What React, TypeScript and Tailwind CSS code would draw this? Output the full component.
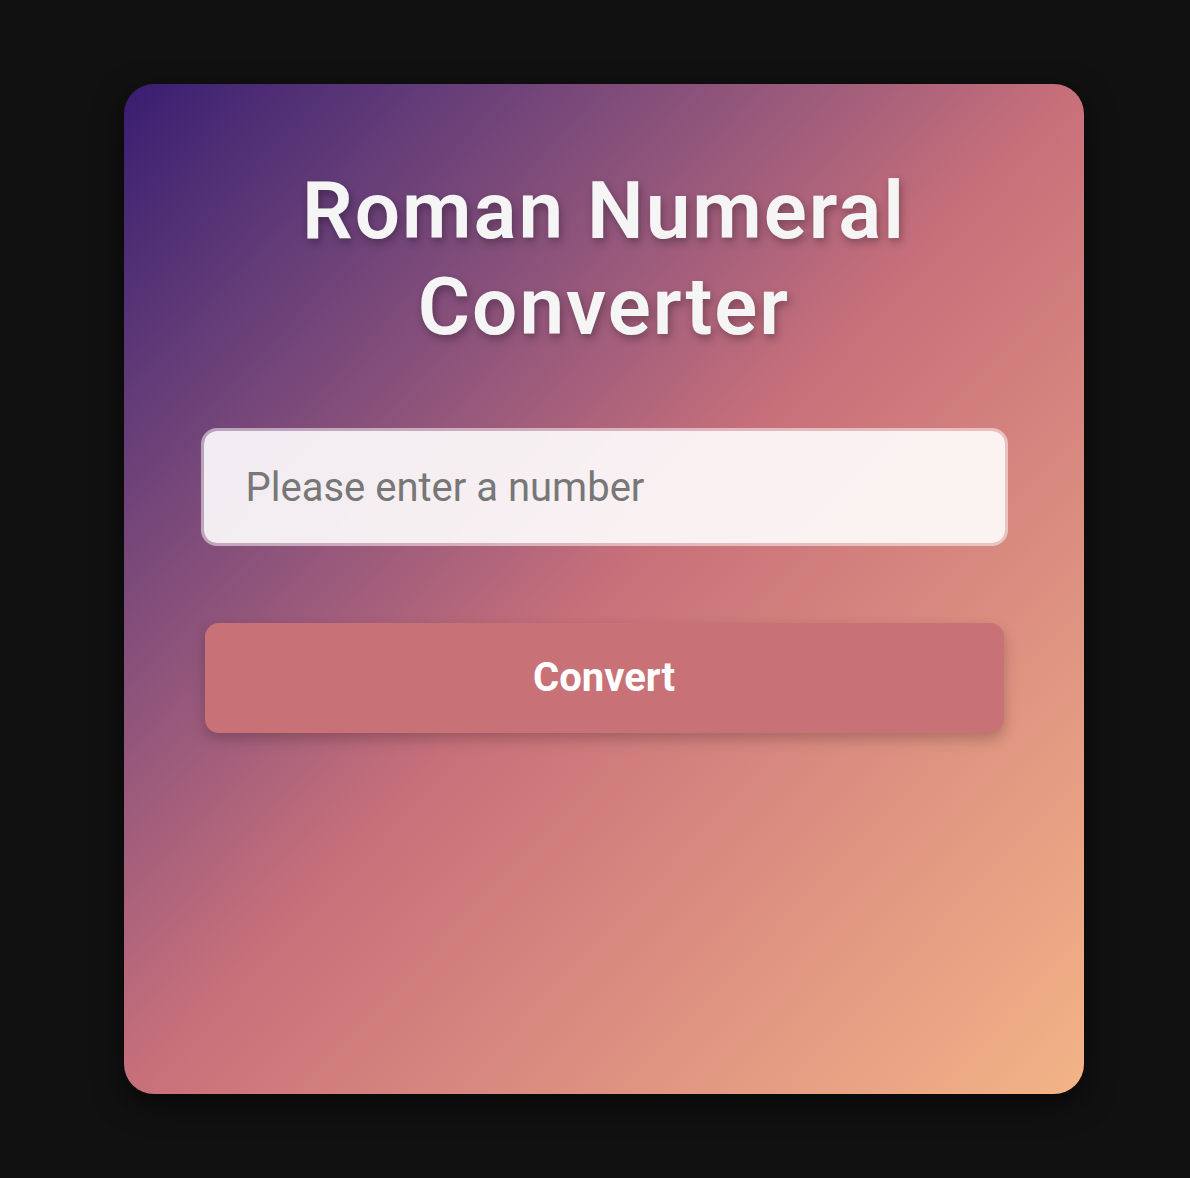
import React, { useState } from 'react';

const App: React.FC = () => {
  const [value, setValue] = useState('');

  return (
    <div
      className="min-h-[1178px] w-full bg-[#111111] pt-[84px] pl-[124px]"
      style={{ fontFamily: 'Roboto, "Liberation Sans", sans-serif' }}
    >
      <div className="flex h-[1010px] w-[960px] flex-col items-center rounded-[30px] bg-gradient-to-br from-[#3a1c71] via-[#c8707a] to-[#f3b486] pt-[79px] shadow-[0_10px_30px_rgba(0,0,0,0.55)]">
        {/* Title */}
        <h1 className="text-center text-[80px] font-semibold leading-[96px] tracking-[2px] text-[#f5f5f5] [text-shadow:2px_4px_8px_rgba(0,0,0,0.3)]">
          Roman Numeral
          <br />
          Converter
        </h1>

        {/* Number input */}
        <input
          type="text"
          value={value}
          onChange={(e) => setValue(e.target.value)}
          placeholder="Please enter a number"
          className="mt-[73px] h-[118px] w-[807px] rounded-[16px] border-[3px] border-white/50 bg-white/90 bg-clip-padding pl-[42px] text-[40px] text-[#333] outline-none placeholder:text-[#777777]"
        />

        {/* Convert button */}
        <button
          type="button"
          className="mt-[77px] h-[110px] w-[799px] rounded-[14px] bg-[#c87277] text-[40px] font-bold text-white shadow-[0_6px_14px_rgba(0,0,0,0.22)]"
        >
          Convert
        </button>
      </div>
    </div>
  );
};

export default App;
